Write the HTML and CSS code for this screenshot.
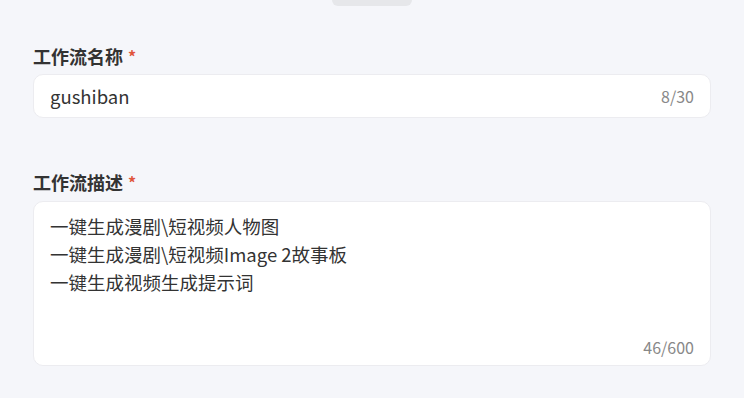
FILE: index.html
```html
<!DOCTYPE html>
<html lang="zh-CN">
<head>
    <meta charset="UTF-8">
    <meta name="viewport" content="width=device-width, initial-scale=1.0">
    <title>编辑工作流</title>
    <link rel="stylesheet" href="styles.css">
</head>
<body>
    <div class="handle"></div>

    <div class="form">
        <div class="field">
            <label class="label">工作流名称 <span class="required">*</span></label>
            <div class="input-box">
                <span class="value">gushiban</span>
                <span class="count">8/30</span>
            </div>
        </div>

        <div class="field">
            <label class="label">工作流描述 <span class="required">*</span></label>
            <div class="textarea-box">
                <div class="lines">
                    <div>一键生成漫剧\短视频人物图</div>
                    <div>一键生成漫剧\短视频Image 2故事板</div>
                    <div>一键生成视频生成提示词</div>
                </div>
                <span class="count">46/600</span>
            </div>
        </div>
    </div>
</body>
</html>
```

FILE: styles.css
```css
:root {
    --bg-color: #f5f6fa;
    --text-color: #333;
    --muted-color: #888;
    --required-color: #e0553d;
}

body {
    font-family: "Noto Sans CJK SC", "Noto Sans", sans-serif;
    margin: 0;
    background: var(--bg-color);
    color: var(--text-color);
}

.handle {
    width: 80px;
    height: 6px;
    margin: 0 auto;
    background: #e6e7ea;
    border-radius: 0 0 14px 14px;
}

.form {
    padding: 38px 33px 0;
    display: flex;
    flex-direction: column;
    gap: 52px;
}

.label {
    display: block;
    font-size: 18px;
    font-weight: 700;
    line-height: 24px;
    margin-bottom: 6px;
    color: #333;
}

.required {
    color: var(--required-color);
    font-size: 16px;
    margin-left: 1px;
    vertical-align: 1px;
}

.input-box {
    display: flex;
    align-items: center;
    justify-content: space-between;
    height: 42px;
    padding: 0 16px;
    background: white;
    border: 1px solid #ececf0;
    border-radius: 10px;
}

.value {
    font-size: 18.5px;
}

.count {
    font-size: 16px;
    color: var(--muted-color);
}

.textarea-box {
    display: flex;
    flex-direction: column;
    justify-content: space-between;
    height: 153px;
    padding: 10px 16px 0;
    background: white;
    border: 1px solid #ececf0;
    border-radius: 10px;
    margin-top: 7px;
}

.lines {
    font-size: 18.5px;
    line-height: 28px;
}

.textarea-box .count {
    align-self: flex-end;
    line-height: 24px;
    margin-bottom: 6px;
}
```
